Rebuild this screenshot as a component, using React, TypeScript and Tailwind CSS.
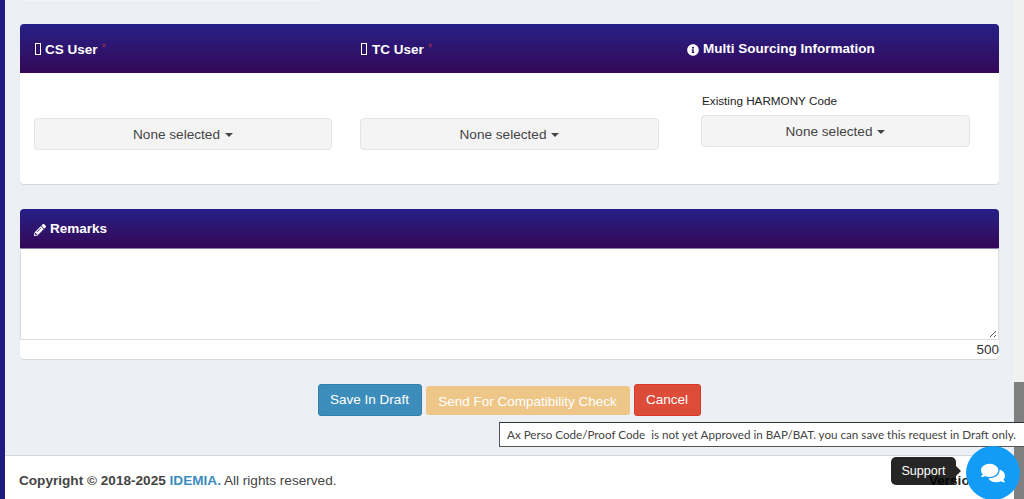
import { FaComments, FaInfoCircle, FaPencilAlt } from "react-icons/fa";

function Tofu() {
  return <span className="inline-block w-[6px] h-[12px] border border-white mr-[4px] align-[-1px]" />;
}

function Star() {
  return <span className="text-[#8f2f55] font-normal text-[12px] ml-[4px] align-[2px]">*</span>;
}

function SelectButton({ className }: { className: string }) {
  return (
    <button className={`h-[32px] pt-[2px] flex items-center justify-center bg-[#f4f4f4] border border-[#e4e4e4] rounded-[4px] text-[13.6px] text-[#444] ${className}`}>
      None selected
      <span className="ml-[5px] w-0 h-0 border-x-[4px] border-x-transparent border-t-[4px] border-t-[#444]" />
    </button>
  );
}

function App() {
  return (
    <div className="relative w-[1024px] h-[499px] overflow-hidden flex bg-[#ecf0f5] font-['Liberation_Sans',Arial,sans-serif]">
      <div className="w-[5px] bg-[#1f1a7d] shrink-0" />

      <div className="w-[1009px] flex flex-col">
        <div className="flex-1 px-[15px]">
          <div className="w-[305px] h-px bg-[#f4f4f4]" />

          <div className="mt-[23px] h-[160px] bg-white rounded-[4px] shadow-[0_1px_1px_rgba(0,0,0,0.1)] flex flex-col">
            <div className="h-[49px] pt-[2px] rounded-t-[4px] bg-gradient-to-b from-[#241f87] to-[#330757] flex items-center pl-[15px] text-white text-[13.5px] font-bold">
              <div className="w-[326px]">
                <Tofu />CS User<Star />
              </div>
              <div className="w-[326px]">
                <Tofu /><span className="ml-px">TC User</span><Star />
              </div>
              <div className="flex items-center">
                <FaInfoCircle className="w-[12px] h-[12px] mr-[4px]" />
                Multi Sourcing Information
              </div>
            </div>
            <div className="flex px-[14px]">
              <SelectButton className="w-[298px] mt-[45px]" />
              <SelectButton className="w-[299px] ml-[28px] mt-[45px]" />
              <div className="ml-[42px] mt-[21px] w-[269px]">
                <div className="pl-px text-[11.7px] leading-[14px] text-[#222] mb-[7px]">Existing HARMONY Code</div>
                <SelectButton className="w-full" />
              </div>
            </div>
          </div>

          <div className="mt-[25px] h-[150px] bg-white rounded-[4px] shadow-[0_1px_1px_rgba(0,0,0,0.1)] flex flex-col">
            <div className="h-[39px] pt-[2px] rounded-t-[4px] bg-gradient-to-b from-[#241f87] to-[#330757] flex items-center pl-[14px] text-white text-[13.5px] font-bold">
              <FaPencilAlt className="w-[12px] h-[12px] mr-[4px]" />
              Remarks
            </div>
            <div className="relative h-[92px] border border-[#dedede] border-t-[#8a7fa8]">
              <svg className="absolute right-[1px] bottom-[1px]" width="8" height="8" viewBox="0 0 8 8">
                <path d="M1 7 L7 1 M5 7 L7 5" stroke="#555" strokeWidth="1" />
              </svg>
            </div>
            <div className="h-[19px] text-right text-[13.5px] leading-[20px] text-[#333]">500</div>
          </div>

          <div className="mt-[25px] flex justify-center items-start gap-[4px] pr-px text-[13.5px] text-white">
            <button className="h-[32px] w-[104px] bg-[#3c8dbc] border border-[#367fa9] rounded-[3px]">Save In Draft</button>
            <button className="h-[29px] mt-[2px] pt-[3px] w-[204px] bg-[#eec688] rounded-[3px]">Send For Compatibility Check</button>
            <button className="h-[32px] w-[67px] bg-[#dd4b39] border border-[#d73925] rounded-[3px]">Cancel</button>
          </div>
        </div>

        <div className="h-[44px] pt-[8px] bg-white border-t border-[#d2d6de] flex items-center justify-between pl-[14px] pr-[36px] text-[13.6px] text-[#444]">
          <div>
            <b>Copyright © 2018-2025 <span className="text-[#3c8dbc]">IDEMIA.</span></b> All rights reserved.
          </div>
          <b className="text-[#222]">Version</b>
        </div>
      </div>

      <div className="relative w-[10px] bg-[#f1f1f1] shrink-0">
        <div className="absolute left-0 right-0 top-[382px] bottom-0 bg-[#808080]" />
      </div>

      <div className="absolute left-[499px] top-[422px] w-[530px] h-[25px] bg-white border border-[#555] border-t-[#333] flex items-center pl-[7px] text-[11.65px] whitespace-pre text-[#444] font-['Lato',sans-serif]">
        Ax Perso Code/Proof Code  is not yet Approved in BAP/BAT. you can save this request in Draft only.
      </div>

      <div className="absolute left-[891px] top-[457px] w-[65px] h-[28px] bg-black/85 rounded-[5px] flex items-center justify-center text-[12.6px] text-white">
        Support
        <span className="absolute right-[-5px] top-[9px] w-0 h-0 border-y-[5px] border-y-transparent border-l-[5px] border-l-black/85" />
      </div>

      <div className="absolute left-[966px] top-[446px] w-[54px] h-[54px] rounded-full bg-[#139cf5] flex items-center justify-center text-white">
        <FaComments className="w-[24px] h-[24px]" />
      </div>
    </div>
  );
}

export default App;
